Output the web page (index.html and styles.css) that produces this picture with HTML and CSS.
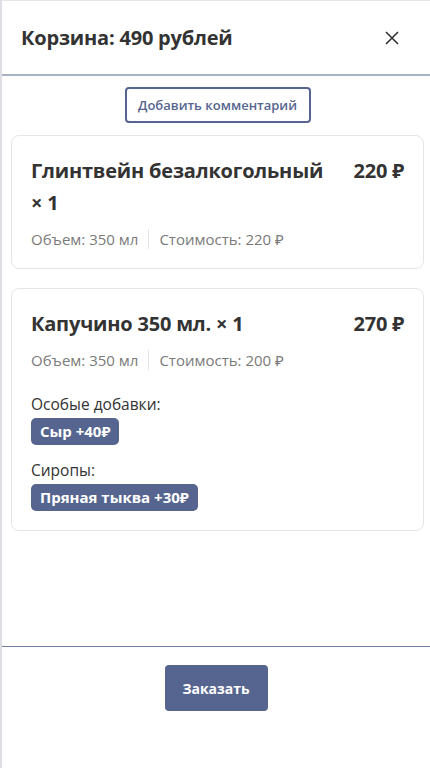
FILE: index.html
```html
<!DOCTYPE html>
<html lang="ru">
<head>
    <meta charset="UTF-8">
    <meta name="viewport" content="width=device-width, initial-scale=1.0">
    <title>Корзина</title>
    <link rel="stylesheet" href="styles.css">
</head>
<body>
    <div class="drawer">
        <div class="drawer-header">
            <h2 class="drawer-title">Корзина: 490 рублей</h2>
            <button class="close-btn" aria-label="Закрыть">
                <svg width="14" height="14" viewBox="0 0 14 14">
                    <path d="M1 1L13 13M13 1L1 13" stroke="#333" stroke-width="1.6" fill="none"/>
                </svg>
            </button>
        </div>

        <div class="drawer-body">
            <div class="comment-row">
                <button class="comment-btn">Добавить комментарий</button>
            </div>

            <div class="cart-item">
                <div class="item-top">
                    <div class="item-name">Глинтвейн безалкогольный ×&nbsp;1</div>
                    <div class="item-price">220 ₽</div>
                </div>
                <div class="item-meta">
                    <span>Объем: 350 мл</span>
                    <span class="meta-sep"></span>
                    <span>Стоимость: 220 ₽</span>
                </div>
            </div>

            <div class="cart-item">
                <div class="item-top">
                    <div class="item-name">Капучино 350 мл. ×&nbsp;1</div>
                    <div class="item-price">270 ₽</div>
                </div>
                <div class="item-meta">
                    <span>Объем: 350 мл</span>
                    <span class="meta-sep"></span>
                    <span>Стоимость: 200 ₽</span>
                </div>
                <div class="addons">
                    <div class="addon-group">
                        <div class="addon-label">Особые добавки:</div>
                        <span class="tag">Сыр +40₽</span>
                    </div>
                    <div class="addon-group">
                        <div class="addon-label">Сиропы:</div>
                        <span class="tag">Пряная тыква +30₽</span>
                    </div>
                </div>
            </div>
        </div>

        <div class="drawer-footer">
            <button class="order-btn">Заказать</button>
        </div>
    </div>
</body>
</html>
```

FILE: styles.css
```css
body {
    margin: 0;
    font-family: "Open Sans", "Noto Sans", sans-serif;
    color: #333333;
    background-color: #FFFFFF;
}
.drawer {
    height: 768px;
    box-sizing: border-box;
    border-left: 2px solid #DEDFE5;
    border-top: 1px solid #E4E5EA;
    display: flex;
    flex-direction: column;
}
.drawer-header {
    height: 73px;
    display: flex;
    align-items: center;
    justify-content: space-between;
    padding: 0 31px 0 19px;
    border-bottom: 2px solid #A9B1C9;
}
.drawer-title {
    margin: 0;
    font-size: 20px;
    font-weight: 700;
    letter-spacing: -0.2px;
    color: #333333;
}
.close-btn {
    background: none;
    border: none;
    padding: 0;
    display: flex;
    cursor: pointer;
}
.drawer-body {
    flex: 1;
    padding: 11px 6px 0 9px;
}
.comment-row {
    display: flex;
    justify-content: center;
    margin-bottom: 12px;
}
.comment-btn {
    font-family: inherit;
    font-size: 13px;
    font-weight: 600;
    color: #56658F;
    background: #FFFFFF;
    border: 2px solid #56658F;
    border-radius: 4px;
    width: 186px;
    height: 36px;
    cursor: pointer;
}
.cart-item {
    border: 1px solid #E6E6E9;
    border-radius: 8px;
    padding: 19px;
    margin-bottom: 19px;
}
.item-top {
    display: flex;
    justify-content: space-between;
    gap: 30px;
}
.item-name, .item-price {
    font-size: 20px;
    font-weight: 700;
    line-height: 32px;
    letter-spacing: -0.2px;
}
.item-price {
    white-space: nowrap;
}
.item-meta {
    display: flex;
    align-items: center;
    gap: 10px;
    margin-top: 10px;
    font-size: 15px;
    line-height: 20px;
    color: #7A7A7A;
}
.meta-sep {
    width: 1px;
    height: 20px;
    background-color: #E6E6E6;
}
.addons {
    display: flex;
    flex-direction: column;
    gap: 14px;
    margin-top: 23px;
}
.addon-label {
    font-size: 15.5px;
    line-height: 22px;
    color: #333333;
    margin-bottom: 3px;
}
.tag {
    display: inline-block;
    background-color: #56658F;
    color: #FFFFFF;
    font-size: 15px;
    font-weight: 700;
    line-height: 27px;
    padding: 0 9px;
    border-radius: 5px;
}
.drawer-footer {
    height: 122px;
    border-top: 1px solid #7181A9;
    display: flex;
    justify-content: center;
    align-items: flex-start;
    padding-top: 18px;
    box-sizing: border-box;
}
.order-btn {
    font-family: inherit;
    font-size: 14px;
    font-weight: 700;
    color: #FFFFFF;
    background-color: #56658F;
    border: none;
    border-radius: 4px;
    width: 103px;
    height: 46px;
    cursor: pointer;
}
```
